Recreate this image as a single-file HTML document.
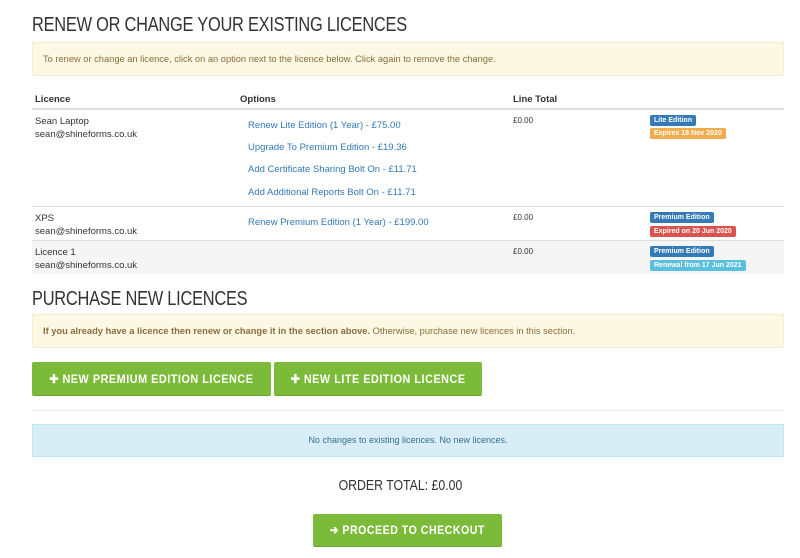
<!DOCTYPE html>
<html><head><meta charset="utf-8"><style>
*{margin:0;padding:0;box-sizing:border-box}
body{width:800px;height:558px;background:#fff;font-family:"Liberation Sans",sans-serif;color:#333;position:relative;overflow:hidden}
.a{position:absolute;white-space:nowrap}
h1{position:absolute;font-weight:normal;font-size:20px;color:#333;transform:scaleX(.82);transform-origin:left top;white-space:nowrap;letter-spacing:-0.3px}
.warn{position:absolute;left:32px;width:752px;background:#fcf8e3;border:1px solid #faebcc;color:#8a6d3b;font-size:9.3px}
.t{font-size:9.5px;color:#333}
.l{font-size:9.5px;color:#337ab7}
.b{position:absolute;font-size:7px;font-weight:bold;color:#fff;padding:1px 4px;border-radius:2px;line-height:9px}
.btn{position:absolute;background:#7cbb3a;color:#fff;font-weight:bold;font-size:12px;letter-spacing:.6px;text-align:center;line-height:34px;border-radius:2px;border-bottom:1px solid #6aa52f}
.btn span{display:inline-block}
</style></head><body>
<h1 style="left:32px;top:14px">RENEW OR CHANGE YOUR EXISTING LICENCES</h1>
<div class="warn" style="top:42px;height:34px;padding:11px 10px;">To renew or change an licence, click on an option next to the licence below. Click again to remove the change.</div>
<div class="a t" style="left:35px;top:94px;font-weight:bold">Licence</div>
<div class="a t" style="left:240px;top:94px;font-weight:bold">Options</div>
<div class="a t" style="left:513px;top:94px;font-weight:bold">Line Total</div>
<div class="a" style="left:32px;top:108px;width:752px;height:2px;background:#ddd"></div>
<div class="a t" style="left:35px;top:115px;line-height:13px">Sean Laptop<br>sean@shineforms.co.uk</div>
<div class="a l" style="left:248px;top:120px">Renew Lite Edition (1 Year) - £75.00</div>
<div class="a l" style="left:248px;top:142px">Upgrade To Premium Edition - £19.36</div>
<div class="a l" style="left:248px;top:164px">Add Certificate Sharing Bolt On - £11.71</div>
<div class="a l" style="left:248px;top:187px">Add Additional Reports Bolt On - £11.71</div>
<div class="a t" style="left:513px;top:116px;font-size:8px">£0.00</div>
<div class="b" style="left:650px;top:115px;background:#337ab7">Lite Edition</div>
<div class="b" style="left:650px;top:128px;background:#f0ad4e">Expires 18 Nov 2020</div>
<div class="a" style="left:32px;top:206px;width:752px;height:1px;background:#ddd"></div>
<div class="a t" style="left:35px;top:212px;line-height:13px">XPS<br>sean@shineforms.co.uk</div>
<div class="a l" style="left:248px;top:217px">Renew Premium Edition (1 Year) - £199.00</div>
<div class="a t" style="left:513px;top:213px;font-size:8px">£0.00</div>
<div class="b" style="left:650px;top:212px;background:#337ab7">Premium Edition</div>
<div class="b" style="left:650px;top:226px;background:#d9534f">Expired on 20 Jun 2020</div>
<div class="a" style="left:32px;top:240px;width:752px;height:34px;background:#f5f5f5;border-top:1px solid #ddd"></div>
<div class="a t" style="left:35px;top:246px;line-height:13px">Licence 1<br>sean@shineforms.co.uk</div>
<div class="a t" style="left:513px;top:247px;font-size:8px">£0.00</div>
<div class="b" style="left:650px;top:246px;background:#337ab7">Premium Edition</div>
<div class="b" style="left:650px;top:260px;background:#5bc0de">Renewal from 17 Jun 2021</div>
<h1 style="left:32px;top:288px">PURCHASE NEW LICENCES</h1>
<div class="warn" style="top:314px;height:34px;padding:11px 10px;"><b>If you already have a licence then renew or change it in the section above.</b> Otherwise, purchase new licences in this section.</div>
<div class="btn" style="left:32px;top:362px;width:239px;height:34px"><span style="transform:scaleX(.9)">✚ NEW PREMIUM EDITION LICENCE</span></div>
<div class="btn" style="left:274px;top:362px;width:208px;height:34px"><span style="transform:scaleX(.9)">✚ NEW LITE EDITION LICENCE</span></div>
<div class="a" style="left:32px;top:410px;width:752px;height:1px;background:#eee"></div>
<div class="a" style="left:32px;top:424px;width:752px;height:33px;background:#d9edf7;border:1px solid #bce8f1;color:#31708f;font-size:9px;text-align:center;line-height:31px">No changes to existing licences. No new licences.</div>
<div class="a" style="left:0;width:800px;top:477px;text-align:center;font-size:15px;color:#333"><span style="display:inline-block;transform:scaleX(.82)">ORDER TOTAL: £0.00</span></div>
<div class="btn" style="left:313px;top:514px;width:189px;height:33px;line-height:32px"><span style="transform:scaleX(.88)">➔ PROCEED TO CHECKOUT</span></div>
</body></html>
